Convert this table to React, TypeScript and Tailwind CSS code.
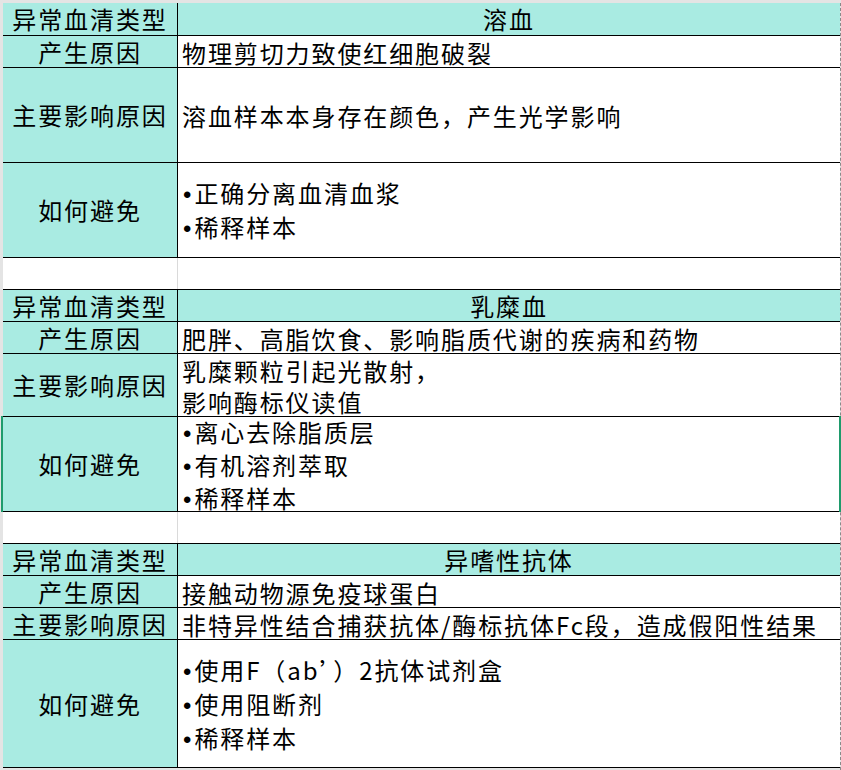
type Row = {
  label: string;
  h: string;
  lines: string[];
  selected?: boolean;
};

type Section = {
  title: string;
  first?: boolean;
  lh: string;
  rows: Row[];
  gap?: boolean;
};

const sections: Section[] = [
  {
    title: "溶血",
    first: true,
    lh: "leading-[32px]",
    gap: true,
    rows: [
      { label: "产生原因", h: "h-[32px]", lines: ["物理剪切力致使红细胞破裂"] },
      { label: "主要影响原因", h: "h-[95px]", lines: ["溶血样本本身存在颜色，产生光学影响"] },
      { label: "如何避免", h: "h-[95px]", lines: ["•正确分离血清血浆", "•稀释样本"] },
    ],
  },
  {
    title: "乳糜血",
    lh: "leading-[31px]",
    gap: true,
    rows: [
      { label: "产生原因", h: "h-[32px]", lines: ["肥胖、高脂饮食、影响脂质代谢的疾病和药物"] },
      { label: "主要影响原因", h: "h-[63px]", lines: ["乳糜颗粒引起光散射，", "影响酶标仪读值"] },
      {
        label: "如何避免",
        h: "h-[95px]",
        lines: ["•离心去除脂质层", "•有机溶剂萃取", "•稀释样本"],
        selected: true,
      },
    ],
  },
  {
    title: "异嗜性抗体",
    lh: "leading-[32px]",
    rows: [
      { label: "产生原因", h: "h-[32px]", lines: ["接触动物源免疫球蛋白"] },
      { label: "主要影响原因", h: "h-[32px]", lines: ["非特异性结合捕获抗体/酶标抗体Fc段，造成假阳性结果"] },
      {
        label: "如何避免",
        h: "h-[128px]",
        lines: ["•使用F（ab’）2抗体试剂盒", "•使用阻断剂", "•稀释样本"],
      },
    ],
  },
];

// bullet drawn in a latin font so it stays narrow like the sheet
const Line = ({ text }: { text: string }) => {
  if (text.startsWith("•")) {
    return (
      <div className="whitespace-nowrap">
        <span className="font-['Liberation_Sans'] tracking-normal pl-[1px] pr-[3px]">•</span>
        {text.slice(1)}
      </div>
    );
  }
  return <div className="whitespace-nowrap">{text}</div>;
};

const SheetTable = ({ section }: { section: Section }) => {
  return (
    <div>
      {/* header */}
      <div
        className={`flex border-b border-black bg-[#a9ebe2] ${
          section.first ? "h-[33px]" : "h-[32px]"
        }`}
      >
        <div className="w-[175px] shrink-0 border-r border-black flex items-center justify-center">
          异常血清类型
        </div>
        <div className="flex-1 flex items-center justify-center">{section.title}</div>
      </div>

      {section.rows.map((row) => (
        <div key={row.label} className={`relative flex border-b border-black ${row.h}`}>
          <div className="w-[175px] shrink-0 bg-[#a9ebe2] border-r border-black flex items-center justify-center">
            {row.label}
          </div>
          <div className={`flex-1 bg-white flex flex-col justify-center pl-[4px] pt-[2px] ${section.lh}`}>
            {row.lines.map((line) => (
              <Line key={line} text={line} />
            ))}
          </div>
          {row.selected && (
            <>
              <div className="absolute left-[-2px] top-[-1px] bottom-[-1px] w-[2px] bg-[#1f9b6c]" />
              <div className="absolute right-[-1px] top-[-1px] bottom-[-1px] w-[2px] bg-[#1f9b6c]" />
            </>
          )}
        </div>
      ))}

      {section.gap && (
        <div className="flex h-[32px] border-b border-black bg-white">
          <div className="w-[175px] shrink-0 border-r border-[#dadada]" />
          <div className="flex-1" />
        </div>
      )}
    </div>
  );
};

export default function App() {
  return (
    <div className="w-[841px] h-[770px] overflow-hidden bg-[#e4e4e4] pt-[3px] pl-[3px] font-['Noto_Sans_CJK_SC','Noto_Sans_CJK_JP',sans-serif] text-[24px] tracking-[1.9px] text-black">
      <div className="w-[838px] h-[767px] border-r border-dashed border-r-[#8a8a8a]">
        {sections.map((s) => (
          <SheetTable key={s.title} section={s} />
        ))}
      </div>
    </div>
  );
}
